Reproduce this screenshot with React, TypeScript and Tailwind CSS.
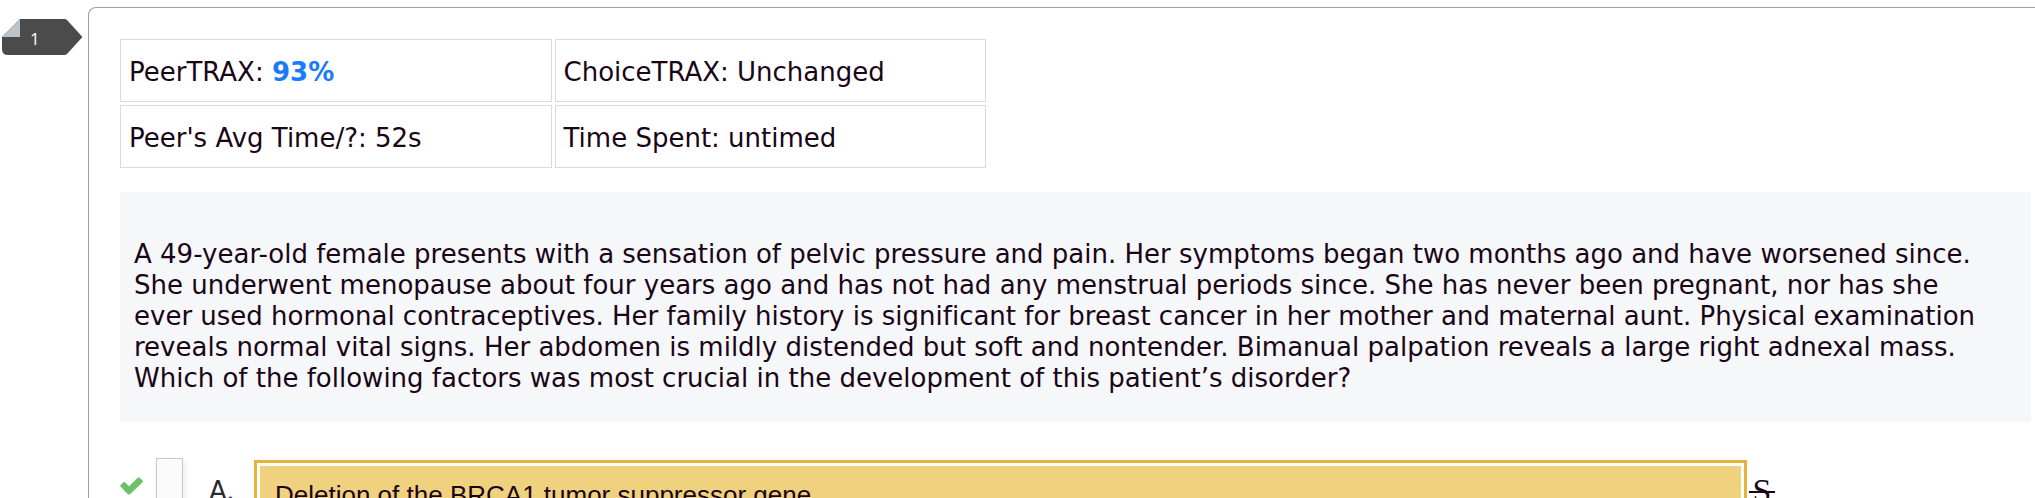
import type { ReactNode } from 'react';

const QUESTION =
  'A 49-year-old female presents with a sensation of pelvic pressure and pain. Her symptoms began two months ago and have worsened since. She underwent menopause about four years ago and has not had any menstrual periods since. She has never been pregnant, nor has she ever used hormonal contraceptives. Her family history is significant for breast cancer in her mother and maternal aunt. Physical examination reveals normal vital signs. Her abdomen is mildly distended but soft and nontender. Bimanual palpation reveals a large right adnexal mass. Which of the following factors was most crucial in the development of this patient’s disorder?';

function StatCell({ children }: { children: ReactNode }) {
  return (
    <td className="w-1/2 border border-[#dadada] px-2 pt-[17px] pb-[13px]">
      {children}
    </td>
  );
}

function NumberTag({ number }: { number: number }) {
  return (
    <div className="relative mt-[19px] ml-0.5 h-9 w-20 shrink-0">
      <svg viewBox="0 0 80 36" className="block h-9 w-20" aria-hidden="true">
        <path d="M18 0H62Q64 0 65 1L80.5 18L65 35Q64 36 62 36H6Q0 36 0 30V18Z" fill="#4b4b4b" />
        <path d="M18 0V18H0Z" fill="#bbc3cb" />
      </svg>
      <span className="absolute top-0 left-7 font-['Open_Sans',sans-serif] text-[17px] leading-10 text-white">
        {number}
      </span>
    </div>
  );
}

export default function App() {
  return (
    <div className="flex h-screen overflow-hidden bg-white font-['DejaVu_Sans',sans-serif] text-[26px] leading-[31px] text-[#1a0518] [font-variant-ligatures:none]">
      <NumberTag number={1} />

      <main className="mt-[7px] ml-1.5 min-w-0 flex-1 rounded-tl-lg border-t border-l border-[#9b9fa3] pt-7 pr-1 pl-[31px]">
        {/* Question stats */}
        <table className="-ml-[3px] w-[872px] max-w-full table-fixed border-separate border-spacing-[3px]">
          <tbody>
            <tr>
              <StatCell>
                PeerTRAX: <b className="text-[#1a7cfa]">93%</b>
              </StatCell>
              <StatCell>ChoiceTRAX: Unchanged</StatCell>
            </tr>
            <tr>
              <StatCell>Peer's Avg Time/?: 52s</StatCell>
              <StatCell>Time Spent: untimed</StatCell>
            </tr>
          </tbody>
        </table>

        {/* Question text */}
        <section className="mt-[21px] bg-[#f5f7f9] pt-[47px] pr-[42px] pb-7 pl-3.5">
          <p>{QUESTION}</p>
        </section>

        {/* Answer choice */}
        <div className="mt-9 flex items-start pr-64">
          <svg viewBox="0 0 24 18" className="mt-[19px] h-[18px] w-6 shrink-0" aria-label="Correct answer">
            <path
              d="M0.6 8L3.4 5.2Q4.2 4.6 5 5.2L9 9.2L17.8 0.7Q18.8 0 19.6 0.7L22.6 3.6Q23.2 4.4 22.6 5.2L10 17.2Q9 18 8 17.2L0.6 9.8Q0 8.8 0.6 8Z"
              fill="#6ac168"
            />
          </svg>
          <input
            id="choice-a"
            type="text"
            className="ml-3 h-[70px] w-[27px] shrink-0 border border-[#c8c8c8] bg-[#fafafa] shadow-[2px_2px_6px_rgba(0,0,0,0.08)]"
          />
          <label htmlFor="choice-a" className="mt-[18px] ml-[26px] w-[45px] shrink-0 text-[#2b2b2b]">
            A.
          </label>
          <button
            type="button"
            className="mt-0.5 min-w-0 flex-1 border-[3px] border-[#e7b23e] bg-white p-[3px] text-left font-['Liberation_Sans',sans-serif]"
          >
            <span className="block bg-[#f0d17e] px-[15px] py-[14px]">
              Deletion of the BRCA1 tumor suppressor gene
            </span>
          </button>
          <button
            type="button"
            aria-label="Strike out choice A"
            className="relative mt-[13px] ml-0.5 w-[26px] shrink-0 text-center font-['Liberation_Serif',serif] text-[34px] leading-10"
          >
            S
            <span className="absolute top-5 left-0 h-0.5 w-full bg-[#1a0518]" />
          </button>
        </div>
      </main>
    </div>
  );
}
